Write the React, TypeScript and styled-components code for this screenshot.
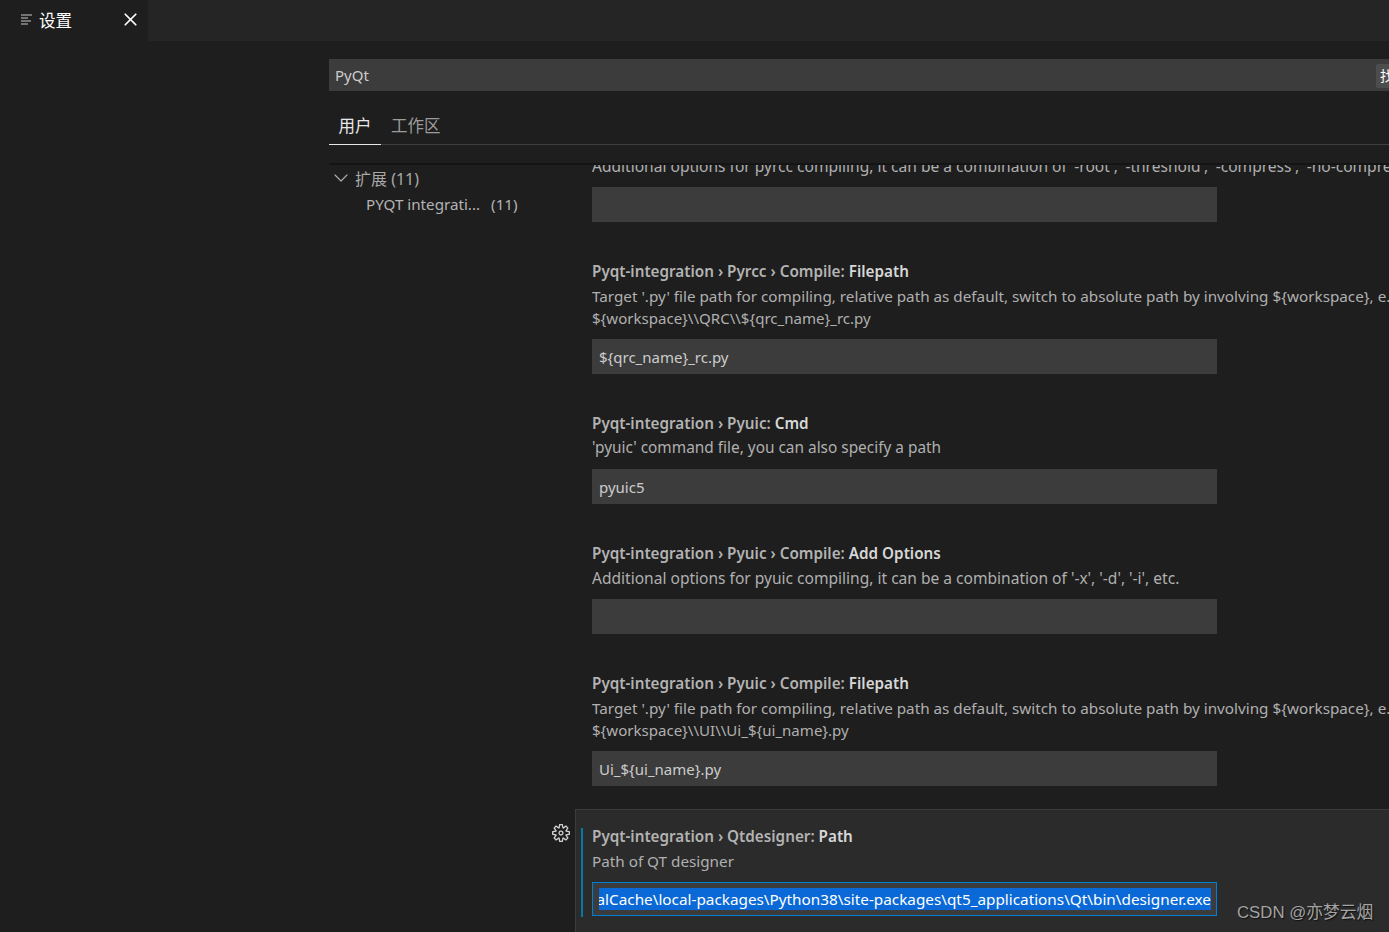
import React from 'react';
import styled, { createGlobalStyle } from 'styled-components';
import { ChevronDown, X } from 'lucide-react';
import { VscSettingsGear } from 'react-icons/vsc';

const uiFont = `"Noto Sans", "Open Sans", "Noto Sans CJK SC", sans-serif`;

const GlobalStyle = createGlobalStyle`
    html, body {
        margin: 0;
        height: 100%;
        background: #1e1e1e;
        overflow: hidden;
    }
    * { box-sizing: border-box; }
`;

const Page = styled.div`
    position: relative;
    width: 1389px;
    height: 932px;
    overflow: hidden;
    background: #1e1e1e;
    color: #cccccc;
    font-family: ${uiFont};
    font-size: 15px;
`;

const TabBar = styled.div`
    height: 41px;
    background: #252526;
    display: flex;
`;

const Tab = styled.div`
    width: 148px;
    background: #1e1e1e;
    display: flex;
    align-items: center;
    padding: 0 7px 2px 21px;
    color: #ffffff;
`;

const TabTitle = styled.span`
    flex: 1;
    margin-left: 6px;
    font-size: 16.5px;
`;

const SettingsEditor = styled.div`
    padding: 18px 0 0 329px;
`;

const SearchBox = styled.div`
    position: relative;
    width: 1160px;
    height: 32px;
    background: #3c3c3c;
    display: flex;
    align-items: center;
    padding-left: 6px;
    font-size: 15px;
`;

const CountBadge = styled.span`
    position: absolute;
    left: 1047px;
    top: 5px;
    height: 24px;
    padding: 0 6px 0 4px;
    line-height: 24px;
    border-radius: 2px;
    background: #4d4d4d;
    color: #ffffff;
    font-size: 14px;
    white-space: nowrap;
`;

const ScopeTabs = styled.div`
    display: flex;
    height: 38px;
    margin-top: 16px;
    border-bottom: 1px solid #3f3f3f;
`;

const ScopeTab = styled.div<{ $active?: boolean }>`
    width: ${p => (p.$active ? '52px' : 'auto')};
    margin-right: 10px;
    margin-bottom: -1px;
    text-align: center;
    line-height: 37px;
    font-size: 16.5px;
    color: ${p => (p.$active ? '#e7e7e7' : '#9b9b9b')};
    border-bottom: 1px solid ${p => (p.$active ? '#e7e7e7' : 'transparent')};
`;

const Body = styled.div`
    display: flex;
    margin-top: 18px;
    height: 769px;
    border-top: 2px solid #141414;
`;

const Tree = styled.div`
    width: 246px;
    flex: none;
`;

const TreeGroup = styled.div`
    display: flex;
    align-items: center;
    height: 25px;
    color: #a9a9a9;
    gap: 2px;
    font-size: 16px;
`;

const TreeItem = styled.div`
    display: flex;
    height: 27px;
    align-items: center;
    padding-left: 37px;
    color: #b4b4b4;
    gap: 11px;
    font-size: 15.2px;
`;

const List = styled.div`
    flex: 1;
    min-width: 0;
    clip-path: inset(0 0 0 -30px);
    display: flex;
    flex-direction: column;
`;

const Row = styled.div<{ $clipped?: boolean; $height: number }>`
    flex: none;
    padding-left: 17px;
    height: ${p => p.$height}px;
    margin-top: ${p => (p.$clipped ? '-13px' : '0')};
`;

const RowTitle = styled.div`
    height: 22px;
    line-height: 22px;
    color: #b3b3b3;
    font-weight: 600;
    font-size: 15.25px;
    white-space: nowrap;
`;

const RowKey = styled.span`
    color: #d7d7d7;
`;

const DescriptionBlock = styled.div`
    margin-top: 3px;
`;

const Description = styled.div<{ $size?: number }>`
    line-height: 22px;
    color: #b0b0b0;
    font-size: ${p => p.$size ?? 15.25}px;
    white-space: nowrap;
`;

const ValueInput = styled.div`
    width: 625px;
    height: 34.5px;
    margin-top: 10px;
    background: #3c3c3c;
    padding-left: 7px;
    line-height: 37px;
    color: #cccccc;
    white-space: nowrap;
`;

const FocusedRow = styled.div`
    position: relative;
    flex: 1;
    display: flex;
    flex-direction: column;
    padding: 15px 0 0 16px;
    background: #2b2b2b;
    border-top: 1px solid #3c3c3c;
    border-left: 1px solid #3c3c3c;
`;

const FocusBar = styled.div`
    position: absolute;
    left: 5px;
    top: 18px;
    width: 2px;
    height: 89px;
    background: #007aa8;
`;

const GearButton = styled.div`
    position: absolute;
    left: -24px;
    top: 14px;
    color: #cfcfcf;
    display: flex;
`;

const FocusedInput = styled.div`
    display: flex;
    align-items: center;
    width: 625px;
    height: 34px;
    margin-top: 10px;
    padding: 0 5px 0 6px;
    background: #3c3c3c;
    border: 1px solid #007fd4;
`;

const SelectionClip = styled.div`
    flex: 1;
    min-width: 0;
    display: flex;
    justify-content: flex-end;
    overflow: hidden;
`;

const SelectedText = styled.span`
    flex: none;
    height: 22px;
    line-height: 23px;
    background: #0a69d6;
    color: #ffffff;
    font-size: 15.3px;
    white-space: nowrap;
`;

const Watermark = styled.div`
    position: absolute;
    left: 1237px;
    top: 899px;
    color: #a3a3a3;
    font-family: "Liberation Sans", "Noto Sans CJK SC", sans-serif;
    font-size: 16.8px;
    text-shadow: 1px 1px 1px #111111;
`;

type TSetting = {
    path: string;
    name: string;
    description: string[];
    descriptionSize?: number;
    value: string;
    height: number;
};

const SETTINGS: TSetting[] = [
    {
        path: 'Pyqt-integration › Pyrcc › Compile:',
        name: 'Filepath',
        description: [
            "Target '.py' file path for compiling, relative path as default, switch to absolute path by involving ${workspace}, e.g.",
            '${workspace}\\\\QRC\\\\${qrc_name}_rc.py',
        ],
        value: '${qrc_name}_rc.py',
        height: 152,
    },
    {
        path: 'Pyqt-integration › Pyuic:',
        name: 'Cmd',
        description: ["'pyuic' command file, you can also specify a path"],
        descriptionSize: 15.4,
        value: 'pyuic5',
        height: 130,
    },
    {
        path: 'Pyqt-integration › Pyuic › Compile:',
        name: 'Add Options',
        description: ["Additional options for pyuic compiling, it can be a combination of '-x', '-d', '-i', etc."],
        descriptionSize: 15.55,
        value: '',
        height: 130,
    },
    {
        path: 'Pyqt-integration › Pyuic › Compile:',
        name: 'Filepath',
        description: [
            "Target '.py' file path for compiling, relative path as default, switch to absolute path by involving ${workspace}, e.g.",
            '${workspace}\\\\UI\\\\Ui_${ui_name}.py',
        ],
        value: 'Ui_${ui_name}.py',
        height: 137,
    },
];

export default function App() {
    return (
        <Page>
            <GlobalStyle />
            <TabBar>
                <Tab>
                    <svg width="12" height="12" viewBox="0 0 12 12" fill="#c8c8c8">
                        <rect x="0" y="0.5" width="11" height="1" />
                        <rect x="0" y="3.5" width="7" height="1" />
                        <rect x="0" y="6.5" width="10" height="1" />
                        <rect x="0" y="9.5" width="7" height="1" />
                    </svg>
                    <TabTitle>设置</TabTitle>
                    <X size={21} strokeWidth={2} color="#ffffff" />
                </Tab>
            </TabBar>
            <SettingsEditor>
                <SearchBox>
                    PyQt
                    <CountBadge>找到 11 个设置</CountBadge>
                </SearchBox>
                <ScopeTabs>
                    <ScopeTab $active>用户</ScopeTab>
                    <ScopeTab>工作区</ScopeTab>
                </ScopeTabs>
                <Body>
                    <Tree>
                        <TreeGroup>
                            <ChevronDown size={24} strokeWidth={1.2} />
                            <span>扩展 (11)</span>
                        </TreeGroup>
                        <TreeItem>
                            <span>PYQT integrati...</span>
                            <span>(11)</span>
                        </TreeItem>
                    </Tree>
                    <List>
                        <Row $clipped $height={108}>
                            <DescriptionBlock>
                                <Description $size={15.55}>
                                    Additional options for pyrcc compiling, it can be a combination of '-root', '-threshold', '-compress', '-no-compress', etc.
                                </Description>
                            </DescriptionBlock>
                            <ValueInput />
                        </Row>
                        {SETTINGS.map(setting => (
                            <Row key={setting.path + setting.name} $height={setting.height}>
                                <RowTitle>
                                    {setting.path} <RowKey>{setting.name}</RowKey>
                                </RowTitle>
                                <DescriptionBlock>
                                    {setting.description.map((line, i) => (
                                        <Description key={line} $size={i > 0 ? 15.05 : setting.descriptionSize}>{line}</Description>
                                    ))}
                                </DescriptionBlock>
                                <ValueInput>{setting.value}</ValueInput>
                            </Row>
                        ))}
                        <FocusedRow>
                            <GearButton>
                                <VscSettingsGear size={18} />
                            </GearButton>
                            <FocusBar />
                            <RowTitle>
                                Pyqt-integration › Qtdesigner: <RowKey>Path</RowKey>
                            </RowTitle>
                            <DescriptionBlock>
                                <Description>Path of QT designer</Description>
                            </DescriptionBlock>
                            <FocusedInput>
                                <SelectionClip>
                                    <SelectedText>LocalCache\local-packages\Python38\site-packages\qt5_applications\Qt\bin\designer.exe</SelectedText>
                                </SelectionClip>
                            </FocusedInput>
                        </FocusedRow>
                    </List>
                </Body>
            </SettingsEditor>
            <Watermark>CSDN @亦梦云烟</Watermark>
        </Page>
    );
}
